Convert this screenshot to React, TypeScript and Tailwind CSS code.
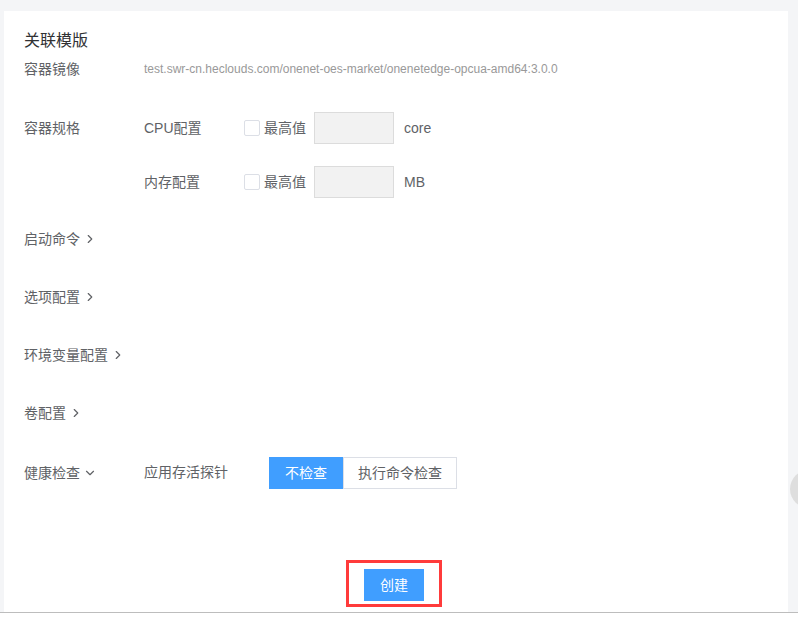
import { ChevronDown, ChevronRight } from 'lucide-react';

const font = { fontFamily: '"Liberation Sans", "Noto Sans CJK SC", sans-serif' };

function FoldRow({ label, open = false }: { label: string; open?: boolean }) {
  return (
    <div className="flex h-5 items-center text-[14px] text-[#606266]">
      <span>{label}</span>
      {open ? (
        <ChevronDown className="ml-[3px] h-[14px] w-[14px] text-[#606266]" strokeWidth={2} />
      ) : (
        <ChevronRight className="ml-[3px] h-[14px] w-[14px] text-[#606266]" strokeWidth={2} />
      )}
    </div>
  );
}

function SpecRow({ label, unit }: { label: string; unit: string }) {
  return (
    <div className="flex h-8 items-center">
      <span className="w-[100px] text-[14px] text-[#606266]">{label}</span>
      <span className="h-4 w-4 rounded-[2px] border border-[#dcdfe6] bg-white" />
      <span className="ml-1 text-[14px] text-[#606266]">最高值</span>
      <div className="ml-2 h-8 w-20 border border-[#dcdcdc] bg-[#f2f2f2]" />
      <span className="ml-[10px] text-[14px] text-[#606266]">{unit}</span>
    </div>
  );
}

export default function App() {
  return (
    <div className="relative flex h-[621px] w-[798px] flex-col overflow-hidden bg-white" style={font}>
      <div className="flex-1 bg-[#f4f5f7] pl-1 pr-[10px] pt-[11px]">
        <div className="flex h-full flex-col bg-white pl-5 pt-[18px]">
          <div className="text-[16px] leading-6 text-[#303133]">关联模版</div>

          <div className="mt-[6px] flex h-5 items-center">
            <span className="w-[120px] text-[14px] text-[#606266]">容器镜像</span>
            <span className="text-[12px] text-[#999]">
              test.swr-cn.heclouds.com/onenet-oes-market/onenetedge-opcua-amd64:3.0.0
            </span>
          </div>

          <div className="mt-[33px] flex">
            <span className="flex h-8 w-[120px] items-center text-[14px] text-[#606266]">容器规格</span>
            <div className="flex flex-col gap-[22px]">
              <SpecRow label="CPU配置" unit="core" />
              <SpecRow label="内存配置" unit="MB" />
            </div>
          </div>

          <div className="mt-[31px] flex flex-col gap-[38px]">
            <FoldRow label="启动命令" />
            <FoldRow label="选项配置" />
            <FoldRow label="环境变量配置" />
            <FoldRow label="卷配置" />
          </div>

          <div className="mt-[34px] flex h-8 items-center">
            <div className="w-[120px]">
              <FoldRow label="健康检查" open />
            </div>
            <span className="mb-[2px] w-[125px] text-[14px] text-[#606266]">应用存活探针</span>
            <div className="flex h-8">
              <button className="h-8 w-[74px] bg-[#409eff] text-[14px] text-white">不检查</button>
              <button className="h-8 w-[114px] border border-[#dcdfe6] bg-white text-[14px] text-[#606266]">
                执行命令检查
              </button>
            </div>
          </div>

          <div className="mt-auto mb-[5px] flex justify-center pr-[24px]">
            <div className="border-[3px] border-[#ff3b3b] px-[15px] pb-[3px] pt-[6px]">
              <button className="h-8 w-[60px] bg-[#409eff] text-[14px] text-white">创建</button>
            </div>
          </div>
        </div>
      </div>
      <div className="h-px bg-[#bdbdbd]" />
      <div className="h-2 bg-white" />
      <div className="absolute left-[790px] top-[470px] h-[38px] w-[38px] rounded-full bg-[#dedede]" />
    </div>
  );
}
